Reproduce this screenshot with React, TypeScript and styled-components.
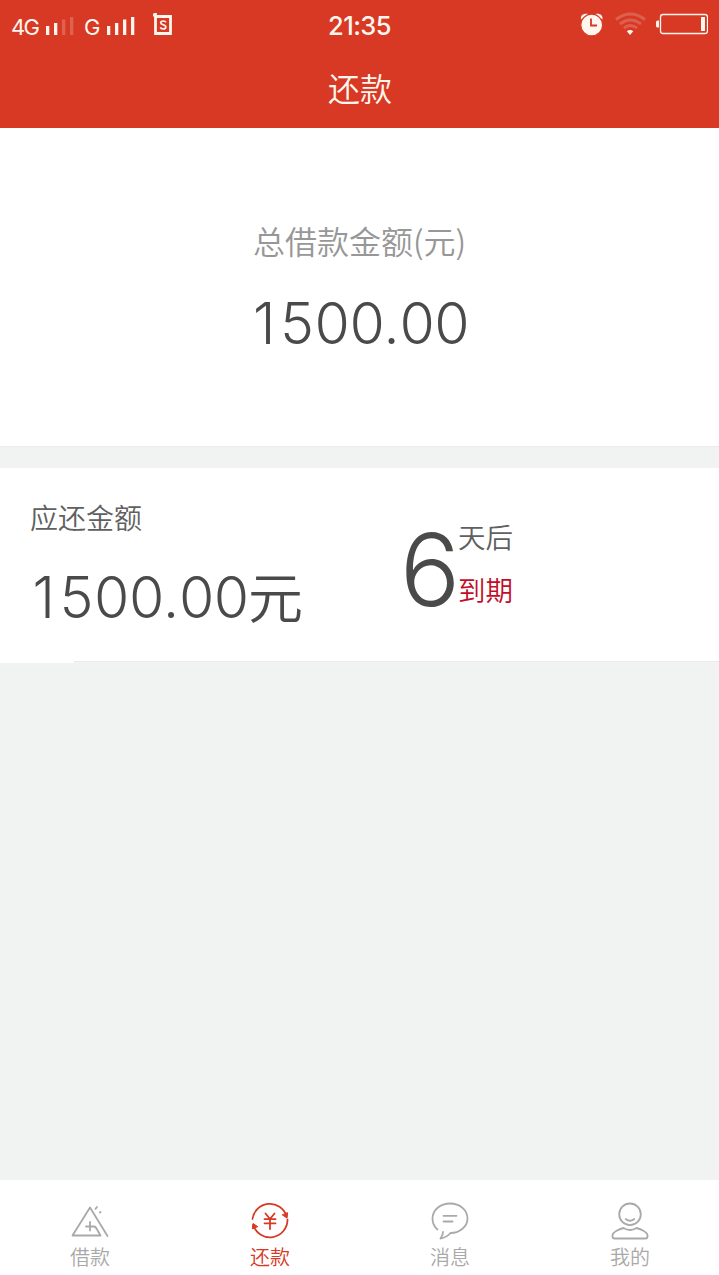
import React from 'react';
import styled, { createGlobalStyle } from 'styled-components';

const cjk = '"Noto Sans CJK SC", sans-serif';

const GlobalStyle = createGlobalStyle`
  * { box-sizing: border-box; }
  body { margin: 0; background: #f1f3f3; font-family: ${cjk}; font-weight: 350; }
`;

const Screen = styled.div`
  display: flex;
  flex-direction: column;
  height: 1275px;
  width: 719px;
  background: #f1f3f3;
  overflow: hidden;
`;

const Header = styled.header`
  height: 128px;
  background: #d73925;
  color: #fff6ee;
`;

const StatusBar = styled.div`
  display: grid;
  grid-template-columns: 1fr auto 1fr;
  height: 50px;
  padding: 0 11px;
`;

const StatusSide = styled.div<{ $end?: boolean }>`
  display: flex;
  align-items: flex-start;
  justify-content: ${p => (p.$end ? 'flex-end' : 'flex-start')};
`;

const Network = styled.span<{ $width: number }>`
  width: ${p => p.$width}px;
  padding-top: 14px;
  font: 400 22px/26px Inter, sans-serif;
  letter-spacing: -1.6px;
  white-space: nowrap;
`;

const Signal = styled.svg`
  margin-right: 10px;
  margin-top: 15px;
`;

const AppBadge = styled.svg`
  margin: 12px 0 0 7px;
`;

const Clock = styled.time`
  padding-top: 10px;
  font: 500 25.5px/32px Inter, sans-serif;
  letter-spacing: -0.6px;
`;

const Title = styled.h1`
  margin: 0;
  padding: 14px 0 0 1px;
  text-align: center;
  font: 350 32px/46px ${cjk};
`;

const Total = styled.section`
  height: 319px;
  padding-top: 89px;
  background: #fff;
  border-bottom: 1px solid #e9eceb;
  text-align: center;
`;

const TotalLabel = styled.div`
  font-size: 32px;
  line-height: 46px;
  color: #979797;
`;

const Amount = styled.div<{ $top: number }>`
  margin-top: ${p => p.$top}px;
  padding-left: 2.5px;
  font: 300 57px/70px Inter, ${cjk};
  font-variant-numeric: tabular-nums;
  letter-spacing: -2px;
  color: #4a4a4a;
  white-space: nowrap;
`;

const Narrow = styled.span<{ $spacing: number }>`
  font-variant-numeric: normal;
  letter-spacing: ${p => p.$spacing}px;
`;

const Unit = styled.span`
  font-family: ${cjk};
  font-weight: 350;
  font-size: 55px;
  line-height: 1;
`;

const Due = styled.section`
  display: flex;
  height: 195px;
  margin-top: 21px;
  background: #fff;
`;

const DueAmount = styled.div`
  width: 400px;
  padding: 29px 0 0 30px;
`;

const DueLabel = styled.div`
  font-size: 28px;
  line-height: 40px;
  color: #606060;
`;

const Days = styled.div`
  width: 58px;
  padding-top: 42px;
  font: 300 100px/120px Inter, sans-serif;
  color: #4a4a4a;
`;

const DayLabels = styled.div`
  padding-top: 48px;
  font-size: 27.5px;
  line-height: 40px;
  color: #606060;
`;

const Expiry = styled.div`
  margin-top: 13px;
  color: #c20d28;
`;

const Divider = styled.div`
  height: 2px;
  margin: -2px 0 0 74px;
  background: #e9eceb;
  border-bottom: 1px solid #f1f3f3;
`;

const TabBar = styled.nav`
  display: grid;
  grid-template-columns: repeat(4, 180px);
  height: 95px;
  margin-top: auto;
  background: #fff;
`;

const Tab = styled.a<{ $active?: boolean }>`
  display: flex;
  flex-direction: column;
  align-items: center;
  padding-top: 22px;
  font-size: 20px;
  line-height: 28px;
  color: ${p => (p.$active ? '#d73925' : '#a9a9a9')};
`;

const TabIcon = styled.svg.attrs({ width: 38, height: 38, viewBox: '0 0 38 38' })`
  display: block;
  margin-bottom: 3px;
  fill: none;
  stroke: currentColor;
  stroke-width: 1.8;
  stroke-linecap: round;
  stroke-linejoin: round;
`;

const Bars = ({ active }: { active: number }) => (
  <Signal width="28" height="21" fill="currentColor">
    {[9, 12, 15.5, 18].map((h, i) => (
      <rect key={i} x={i * 8} y={20 - h} width="3.3" height={h} opacity={i < active ? 1 : 0.22} />
    ))}
  </Signal>
);

const Sum = () => (
  <>
    <Narrow $spacing={3.5}>1</Narrow>500<Narrow $spacing={-1}>.</Narrow>00
  </>
);

export default function App() {
  return (
    <Screen>
      <GlobalStyle />
      <Header>
        <StatusBar>
          <StatusSide>
            <Network $width={35}>4G</Network>
            <Bars active={2} />
            <Network $width={23}>G</Network>
            <Bars active={4} />
            <AppBadge width="22" height="24" fill="none" stroke="currentColor">
              <path d="M3.5 4.5H18.5V21.5H3.5V1M1 3H4" strokeWidth="2.8" />
              <path d="M13.8 10.4C13.3 8.5 8.7 8.4 8.7 10.8C8.7 13.4 13.8 12.2 13.8 15C13.8 17.7 8.9 17.5 8.3 15.3" strokeWidth="1.7" />
            </AppBadge>
          </StatusSide>
          <Clock>21:35</Clock>
          <StatusSide $end>
            <svg width="128" height="40" fill="none" stroke="currentColor">
              <path d="M1 19.5C0 15 4.5 12.8 8.5 14.3ZM22.4 19.5C23.4 15 18.9 12.8 14.9 14.3Z" fill="currentColor" stroke="none" />
              <circle cx="11.7" cy="25" r="10.9" fill="currentColor" stroke="#d73925" strokeWidth="1.1" />
              <path d="M11 18.5V25.5H17" stroke="#d73925" strokeWidth="1.8" />
              <g strokeWidth="3" opacity="0.2">
                <path d="M36 19.5Q50.2 8.5 65 19.5" />
                <path d="M40 24Q50.2 16 61 24" />
                <path d="M44 28Q50.2 23 57 28" />
              </g>
              <path d="M46.8 31.2Q50 28.8 53.3 31.2L50 35Z" fill="currentColor" stroke="none" />
              <rect x="80.5" y="14.5" width="47" height="19" rx="2.5" strokeWidth="1.3" />
              <path d="M79 20.5H77.8Q76 20.5 76 22V26Q76 27.5 77.8 27.5H79Z" fill="currentColor" stroke="none" />
              <rect x="121" y="17" width="4" height="14" fill="currentColor" stroke="none" />
            </svg>
          </StatusSide>
        </StatusBar>
        <Title>还款</Title>
      </Header>
      <Total>
        <TotalLabel>总借款金额(元)</TotalLabel>
        <Amount $top={26}><Sum /></Amount>
      </Total>
      <Due>
        <DueAmount>
          <DueLabel>应还金额</DueLabel>
          <Amount $top={26}><Sum /><Unit>元</Unit></Amount>
        </DueAmount>
        <Days>6</Days>
        <DayLabels>
          天后
          <Expiry>到期</Expiry>
        </DayLabels>
      </Due>
      <Divider />
      <TabBar>
        <Tab>
          <TabIcon>
            <path d="M36.5 34L19 5.5L1.5 33.5H29.5L25.5 26.5Q24.5 24.5 23 24.5H15M19 20V28.5M24.5 6.8L26 5M29 10.5L29.5 10" />
          </TabIcon>
          借款
        </Tab>
        <Tab $active>
          <TabIcon>
            <path d="M1.5 17A17.5 17.5 0 0 1 35.5 14M36.5 17.5A17.5 17.5 0 0 1 2.3 23" />
            <path d="M31.5 13L36 16L36.6 11ZM6.5 24.5L2 21.5L1.4 26.5Z" fill="currentColor" strokeWidth="1" />
            <path d="M14.5 11.5L19 17L23.5 11.5M13.5 17.2H24.5M13.5 21.3H24.5M19 17V27" />
          </TabIcon>
          还款
        </Tab>
        <Tab>
          <TabIcon>
            <path d="M6.5 27.5C3 24.5 1.5 20.7 1.5 16.5C1.5 8 9.5 1.5 19 1.5C29 1.5 36.5 8 36.5 16.5C36.5 25 28 31 19.5 31Q15.5 35.5 9.5 36.5Q12 33 12 30M12.5 13.8H25.5M12.5 19.5H21.5" />
          </TabIcon>
          消息
        </Tab>
        <Tab>
          <TabIcon>
            <circle cx="19" cy="12.3" r="10.8" />
            <path d="M14.8 17Q19 20.5 23.2 17M12.5 26Q19 30 25.5 26C28 26.5 36.5 29.5 36.5 33.5V34.5Q36.5 36.5 34.5 36.5H3.5Q1.5 36.5 1.5 34.5V33.5C1.5 29.5 10 26.5 12.5 26Z" />
          </TabIcon>
          我的
        </Tab>
      </TabBar>
    </Screen>
  );
}
